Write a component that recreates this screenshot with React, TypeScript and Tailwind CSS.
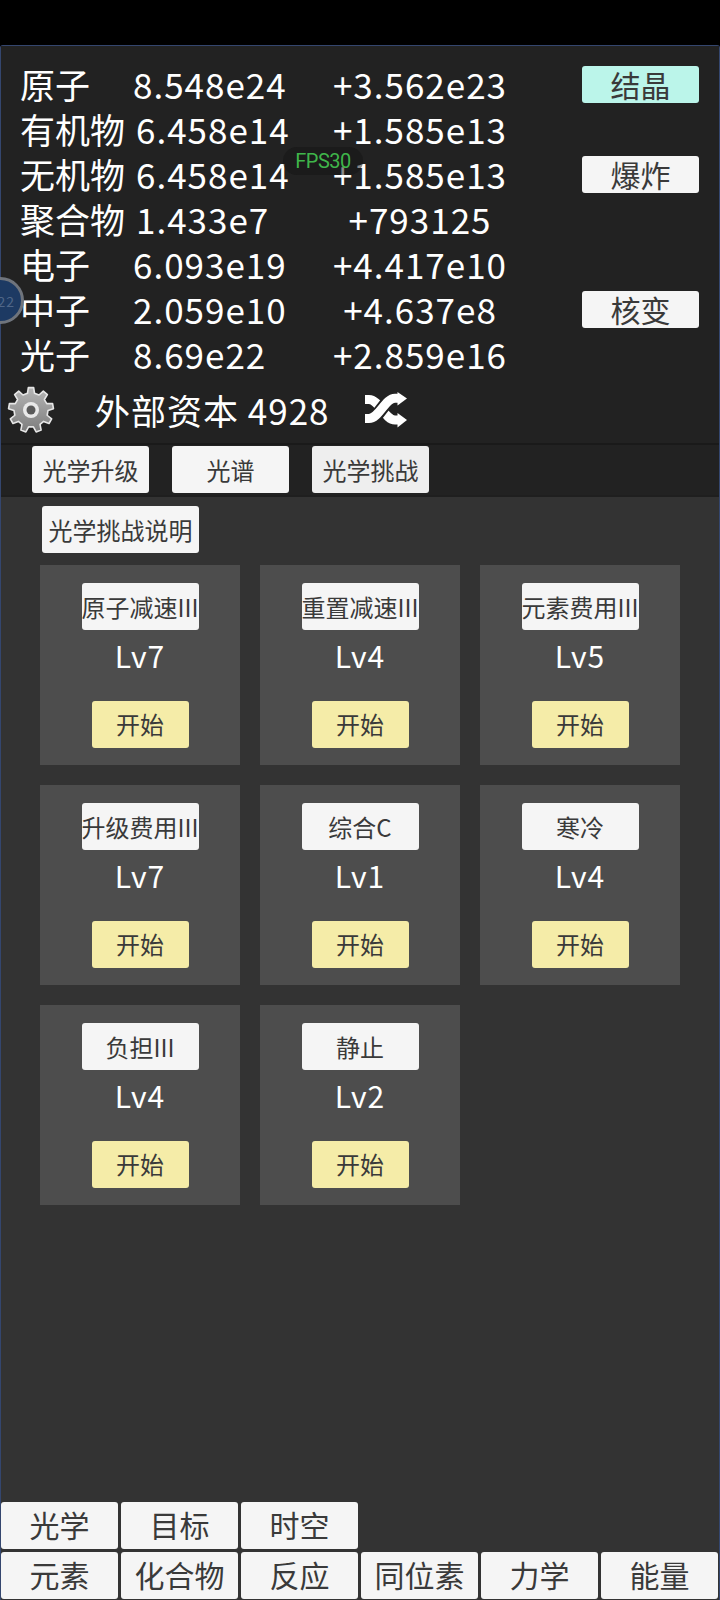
const FONT = "font-['Noto_Sans_CJK_SC','Noto_Sans',sans-serif]";

function Btn({ label, className = "", bg = "bg-[#f5f5f5]" }: { label: string; className?: string; bg?: string }) {
  return (
    <div className={`flex items-center justify-center rounded-[3px] ${bg} text-[#3a3a3a] leading-none whitespace-nowrap ${className}`}>
      {label}
    </div>
  );
}

function gearPath() {
  const n = 9;
  const cx = 24;
  const cy = 24;
  const outer = 22.5;
  const inner = 17;
  const pts: string[] = [];
  for (let i = 0; i < n; i++) {
    const step = (Math.PI * 2) / n;
    const a = i * step - Math.PI / 2;
    const list: [number, number][] = [
      [inner, a - step * 0.3],
      [outer, a - step * 0.17],
      [outer, a + step * 0.17],
      [inner, a + step * 0.3],
    ];
    for (const [r, t] of list) {
      pts.push(`${(cx + r * Math.cos(t)).toFixed(2)} ${(cy + r * Math.sin(t)).toFixed(2)}`);
    }
  }
  return `M${pts.join("L")}Z`;
}

function Gear() {
  return (
    <svg width="48" height="48" viewBox="0 0 48 48">
      <defs>
        <linearGradient id="gearFill" x1="0" y1="0" x2="0" y2="1">
          <stop offset="0" stopColor="#b5b5b5" />
          <stop offset="1" stopColor="#7d7d7d" />
        </linearGradient>
      </defs>
      <path d={gearPath()} fill="url(#gearFill)" stroke="#e6e6e6" strokeWidth="1.6" strokeLinejoin="round" />
      <circle cx="24" cy="24" r="8" fill="#e9e9e9" />
      <circle cx="24" cy="24" r="4.5" fill="#5a5a5a" />
    </svg>
  );
}

function Shuffle() {
  return (
    <svg width="43" height="36" viewBox="0 0 43 36" fill="none">
      <path d="M0 7.5H4C14 7.5 20 28 30 28H34" stroke="#ffffff" strokeWidth="9" />
      <path d="M6 26.5C14 26 20 6.3 30 6.3" stroke="#222222" strokeWidth="13" />
      <path d="M0 26.5H4C14 26.5 20 6.3 30 6.3H34" stroke="#ffffff" strokeWidth="9" />
      <path d="M32.5 0L42 6.5L32.5 13.5Z" fill="#ffffff" />
      <path d="M32.5 21L42 28L32.5 35.5Z" fill="#ffffff" />
    </svg>
  );
}

const rows: [string, string, string, string | null, boolean?][] = [
  ["原子", "8.548e24", "+3.562e23", "结晶", true],
  ["有机物", "6.458e14", "+1.585e13", null],
  ["无机物", "6.458e14", "+1.585e13", "爆炸"],
  ["聚合物", "1.433e7", "+793125", null],
  ["电子", "6.093e19", "+4.417e10", null],
  ["中子", "2.059e10", "+4.637e8", "核变"],
  ["光子", "8.69e22", "+2.859e16", null],
];

const cards: [string, string][] = [
  ["原子减速III", "Lv7"],
  ["重置减速III", "Lv4"],
  ["元素费用III", "Lv5"],
  ["升级费用III", "Lv7"],
  ["综合C", "Lv1"],
  ["寒冷", "Lv4"],
  ["负担III", "Lv4"],
  ["静止", "Lv2"],
];

export default function App() {
  return (
    <div className={`relative w-[720px] h-[1600px] overflow-hidden bg-black ${FONT}`}>
      <div className="h-[45px] bg-black" />
      <div className="h-[1555px] flex flex-col bg-[#333333] border-l border-t border-r border-[#34466e] rounded-t-[3px]">
        {/* header panel */}
        <div className="h-[397px] bg-[#222222] flex flex-col">
          <div className="pt-[15px] pl-[19px] pr-[20px] flex flex-col">
            {rows.map(([name, val, delta, btn, active]) => (
              <div key={name} className="h-[45px] flex items-center text-[35px] leading-none text-white">
                <span className="min-w-[113px] pr-[11px] whitespace-nowrap">{name}</span>
                <span className="flex-1 whitespace-nowrap tracking-[1px]">{val}</span>
                <span className="w-[196px] text-center whitespace-nowrap mr-[64px] tracking-[1px]">{delta}</span>
                <div className="w-[117px]">
                  {btn && (
                    <Btn
                      label={btn}
                      bg={active ? "bg-[#bbf5ea]" : "bg-[#f5f5f5]"}
                      className="h-[37px] mt-[2px] pb-[2px] text-[30px]"
                    />
                  )}
                </div>
              </div>
            ))}
          </div>
          <div className="flex flex-1 items-center pl-[6px] text-[35px] leading-none text-white">
            <Gear />
            <span className="ml-[40px] whitespace-nowrap tracking-[1px]">外部资本 4928</span>
            <span className="ml-[35px] flex"><Shuffle /></span>
          </div>
        </div>
        {/* tabs */}
        <div className="h-[52px] bg-[#222222] border-t-2 border-[#1a1a1a] flex items-start gap-[23px] pt-[1px] pl-[31px] text-[24px]">
          <Btn label="光学升级" className="w-[117px] h-[47px]" />
          <Btn label="光谱" className="w-[117px] h-[47px]" />
          <Btn label="光学挑战" bg="bg-[#eeeeee]" className="w-[117px] h-[47px]" />
        </div>
        {/* content */}
        <div className="flex-1 border-t-2 border-[#1f1f1f] pl-[39px] pt-[9px] text-[24px]">
          <Btn label="光学挑战说明" className="w-[157px] h-[47px] ml-[2px]" />
          <div className="grid grid-cols-[200px_200px_200px] gap-[20px] mt-[12px]">
            {cards.map(([name, lv]) => (
              <div key={name} className="h-[200px] bg-[#4d4d4d] flex flex-col items-center pt-[18px]">
                <Btn label={name} className="w-[117px] h-[47px]" />
                <div className="h-[53px] pb-[4px] flex items-center text-[30px] tracking-[1px] text-white leading-none">{lv}</div>
                <Btn label="开始" bg="bg-[#f5eca8]" className="w-[97px] h-[47px] mt-[18px] pb-[1px]" />
              </div>
            ))}
          </div>
        </div>
        {/* bottom nav */}
        <div className="flex flex-col gap-[3px] pb-[1px] text-[30px]">
          <div className="flex gap-[3px]">
            {["光学", "目标", "时空"].map((t) => (
              <Btn key={t} label={t} className="w-[117px] h-[47px] pb-[3px]" />
            ))}
          </div>
          <div className="flex gap-[3px]">
            {["元素", "化合物", "反应", "同位素", "力学", "能量"].map((t) => (
              <Btn key={t} label={t} className="w-[117px] h-[47px] pb-[3px]" />
            ))}
          </div>
        </div>
      </div>
      {/* overlays */}
      <div className="absolute left-[283px] top-[147px] w-[80px] h-[28px] rounded-full bg-[#141414]/50 flex items-center justify-center text-[20px] leading-none tracking-[-0.5px] text-[#3fb54a] font-['Roboto',sans-serif]">
        FPS30
      </div>
      <div className="absolute left-[-24px] top-[277px] w-[48px] h-[47px] rounded-full bg-[#1d3a63] border-[3px] border-[#6f747c] flex items-center justify-end pr-[6px] text-[14px] leading-none tracking-[1px] text-[#4f6688]">
        22
      </div>
    </div>
  );
}
